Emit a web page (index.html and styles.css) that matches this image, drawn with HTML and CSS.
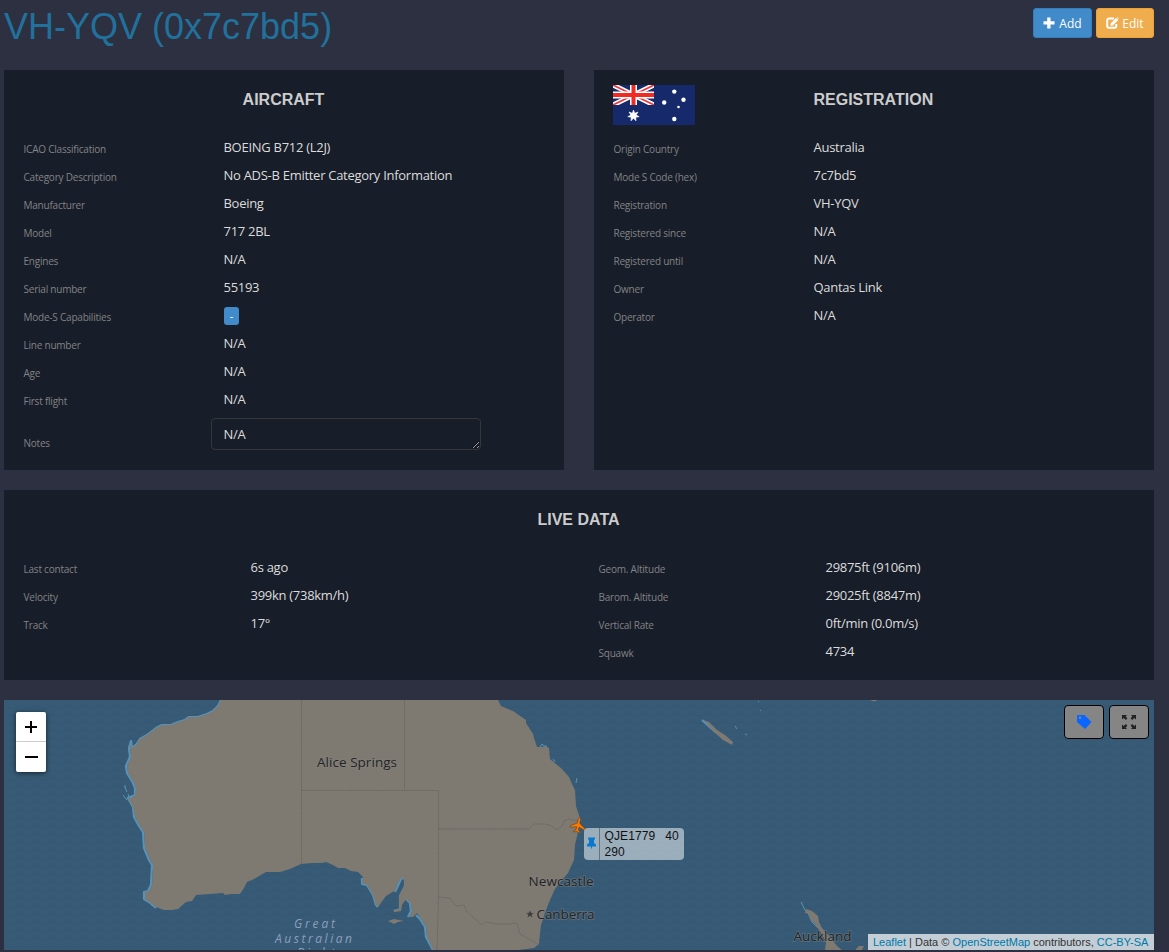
FILE: index.html
```html
<!DOCTYPE html>
<html lang="en">
<head>
<meta charset="utf-8">
<title>VH-YQV (0x7c7bd5)</title>
<link rel="stylesheet" href="styles.css">
</head>
<body>
<header class="top">
  <h1 class="title">VH-YQV (0x7c7bd5)</h1>
  <div class="actions">
    <button class="btn btn-add"><svg class="btn-icon" width="12" height="12" viewBox="0 0 12 12"><path d="M4.2 0.5h3.3v3.7H11.500v3.300H7.500v4H4.200v-4H.5V4.200h3.700z" fill="#fff"/></svg><span>Add</span></button>
    <button class="btn btn-edit"><svg class="btn-icon" width="13" height="12" viewBox="0 0 13 12"><path d="M8 1.500H3A1.800 1.800 0 0 0 1.200 3.300V9A1.800 1.800 0 0 0 3 10.800H8.500A1.800 1.800 0 0 0 10.300 9V7" fill="none" stroke="#fff" stroke-width="1.900"/><path d="M4.400 8.800l.4-2.600L10 1l2.200 2.100L7 8.400zM10.600.4l.5-.4 1.900 1.800-.4.500z" fill="#fff"/></svg><span>Edit</span></button>
  </div>
</header>

<main class="content">
  <div class="pair">
    <section class="panel panel-tall">
      <h2 class="heading">AIRCRAFT</h2>
      <dl class="rows">
        <dt>ICAO Classification</dt><dd>BOEING B712 (L2J)</dd>
        <dt>Category Description</dt><dd>No ADS-B Emitter Category Information</dd>
        <dt>Manufacturer</dt><dd>Boeing</dd>
        <dt>Model</dt><dd>717 2BL</dd>
        <dt>Engines</dt><dd>N/A</dd>
        <dt>Serial number</dt><dd>55193</dd>
        <dt>Mode-S Capabilities</dt><dd><span class="chip">-</span></dd>
        <dt>Line number</dt><dd>N/A</dd>
        <dt>Age</dt><dd>N/A</dd>
        <dt>First flight</dt><dd>N/A</dd>
      </dl>
      <div class="notes-row">
        <label class="notes-label" for="notes">Notes</label>
        <textarea id="notes" class="notes" rows="1">N/A</textarea>
      </div>
    </section>

    <section class="panel panel-tall">
      <div class="reg-head">
        <svg class="flag" width="82" height="40" viewBox="0 0 82 40">
          <defs><clipPath id="canton"><rect width="41" height="20"/></clipPath></defs>
          <rect width="82" height="40" fill="#15296b"/>
          <g clip-path="url(#canton)">
            <path d="M0 0L41 20M41 0L0 20" stroke="#fff" stroke-width="5"/>
            <path d="M0 0L41 20M41 0L0 20" stroke="#ef3340" stroke-width="1.600"/>
            <path d="M20.500 0V20M0 10H41" stroke="#fff" stroke-width="7"/>
            <path d="M20.500 0V20M0 10H41" stroke="#f02b23" stroke-width="4"/>
          </g>
          <path fill="#fff" stroke="#fff" stroke-width=".6" d="M20.500 25l1.200 3.300 3.300-1.300-1.800 3 3 1.700-3.400.5.200 3.600-2.500-2.500-2.500 2.500.2-3.600-3.400-.5 3-1.700-1.800-3 3.300 1.300z"/>
          <g fill="#fff"><circle cx="61.300" cy="6.600" r="2.200"/><circle cx="51.200" cy="17.500" r="2.200"/><circle cx="70.500" cy="14.700" r="2.200"/><circle cx="65.500" cy="22" r="1.300"/><circle cx="61.300" cy="34" r="2.200"/></g>
        </svg>
        <h2 class="heading heading-left">REGISTRATION</h2>
      </div>
      <dl class="rows">
        <dt>Origin Country</dt><dd>Australia</dd>
        <dt>Mode S Code (hex)</dt><dd>7c7bd5</dd>
        <dt>Registration</dt><dd>VH-YQV</dd>
        <dt>Registered since</dt><dd>N/A</dd>
        <dt>Registered until</dt><dd>N/A</dd>
        <dt>Owner</dt><dd>Qantas Link</dd>
        <dt>Operator</dt><dd>N/A</dd>
      </dl>
    </section>
  </div>

  <section class="panel panel-live">
    <h2 class="heading">LIVE DATA</h2>
    <div class="live">
      <dl class="rows rows-live">
        <dt>Last contact</dt><dd>6s ago</dd>
        <dt>Velocity</dt><dd>399kn (738km/h)</dd>
        <dt>Track</dt><dd>17°</dd>
      </dl>
      <dl class="rows rows-live">
        <dt>Geom. Altitude</dt><dd>29875ft (9106m)</dd>
        <dt>Barom. Altitude</dt><dd>29025ft (8847m)</dd>
        <dt>Vertical Rate</dt><dd>0ft/min (0.0m/s)</dd>
        <dt>Squawk</dt><dd>4734</dd>
      </dl>
    </div>
  </section>

  <section class="map">
    <svg class="map-art" width="1150" height="250" viewBox="4 700 1150 250">
      <defs>
        <pattern id="waves" width="16" height="8" patternUnits="userSpaceOnUse"><path d="M0 3Q4 1 8 3T16 3" fill="none" stroke="#365771" stroke-width="1.500"/></pattern>
      </defs>
      <rect x="4" y="700" width="1150" height="250" fill="#375b76"/>
      <rect x="4" y="700" width="1150" height="250" fill="url(#waves)"/>
      <path class="shore" d="M221 700L218 706 213 711 207 714 198 717 189 717 185 720 178 722 171 725 162 725 156 728 147 735 140 739 136 745 132 748 131 741 129 748 130 757 126 766 127 773 133 783 135 788 135 795 128 798 133 807 134 817 139 826 143 832 144 848 149 860 152 865 151 885 148 891 144 892 144 899 149 902 156 908"/>
      <path class="shore" d="M362 878L362 884 367 885 373 895 376 905 378 907M395 892L402 877 405 880 405 886 400 896 400 909 394 911M406 899L410 903 411 911 408 917M416 915L420 919 425 927 426 937 433 950"/>
      <path class="land" d="M221 700L218 706 213 711 207 714 198 717 189 717 185 720 178 722 171 725 162 725 156 728 147 735 140 739 136 745 132 748 131 742 130 748 131 757 127 766 128 773 134 783 136 788 135 796 128 798 133 807 135 817 140 826 144 832 145 848 150 860 153 865 152 885 149 891 145 892 145 899 149 902 156 907 164 910 172 910 178 909 186 902 192 901 196 895 210 894 223 893 225 895 231 894 240 894 244 888 247 882 254 879 266 872 280 872 290 869 301 864 312 863 322 863 326 862 333 865 338 868 345 868 351 871 358 872 363 877 362 883 367 885 373 895 376 905 378 907 386 896 396 890 397 885 402 877 404 880 404 886 399 896 399 909 393 910 395 912 401 911 402 905 406 899 411 904 412 911 409 917 413 917 417 913 421 919 426 927 427 937 433 950H519L534 948 539 944 540 933 541 925 546 910 550 900 555 889 562 880 568 873 574 860 575 845 578 832 580 818 576 806 575 790 572 784 569 777 562 769 556 764 550 759 549 748 545 746 542 747 537 747 535 741 533 734 526 723 526 720 513 711 501 706 498 700Z"/>
      <path class="land" d="M388 921L394 919 404 921 398 922 394 924Z"/>
      <path class="border" d="M301.500 700V864M404.500 700V790M301.500 790.500H438.500V897L437 950M438.500 829H529L534 824H545L552 826 556 830 562 826 564 821 569 819 578 821M438.500 897L450 898 456 906 464 905 467 912 482 925 485 922 497 924 510 924 517 923 520 934 538 944"/>
      <g class="reef"><path d="M125 785v3M128 794l1 3 3 1M123 795l4 5M125 787l2 5"/><path d="M540 747l2-3 2 2h3M553 759l2 3M576 783l1-5M735 726l2 3M745 734l2 1M758 701l1 1M760 710l1 1"/></g>
      <path d="M702 720L714 731 723 737 732 743" fill="none" stroke="#5693bb" stroke-width="2"/>
      <path class="land" d="M703.500 720L709 722 717 730 725 735 733 742 732 745 723 740 714 732Z"/>
      <path d="M801 902L805 910 808 913 812 922 819 929" fill="none" stroke="#5693bb"/>
      <path class="land" d="M806 909L812 911 818 916 819 922 822 928 830 937 837 946 842 950H825L826 942 820 931 815 924 810 919 809 914 805 913ZM856 949L859 946H864L862 950H856ZM870 700H878L874 701.500Z"/>
      <path d="M530 909.500l1.300 3.200h3.300l-2.600 2 1 3.500-3-2.100-3 2.100 1-3.500-2.600-2h3.300z" fill="#3d3d3f" stroke="#8c8880" stroke-width=".5"/>
      <g class="place">
        <text x="317" y="767" textLength="80">Alice Springs</text>
        <text x="528.500" y="886" textLength="65">Newcastle</text>
        <text x="536.500" y="919" textLength="58">Canberra</text>
        <text x="793.500" y="941" textLength="58">Auckland</text>
      </g>
      <g class="sea">
        <text x="294" y="928" textLength="41">Great</text>
        <text x="275" y="943" textLength="77">Australian</text>
        <text x="297" y="957" textLength="38">Bight</text>
      </g>
      <g transform="translate(578.200 825.200) rotate(12)">
        <path d="M0-7.500C.9-7.500 1.200-6.500 1.200-5.500V-2L7.500 2V3.700L1.200 1.800V4.800L3.200 6.200V7.500L0 6.500-3.200 7.500V6.200L-1.200 4.800V1.800L-7.500 3.700V2L-1.200-2V-5.500C-1.200-6.500-.9-7.500 0-7.500Z" fill="#ff7800" stroke="#624523" stroke-width=".6"/>
      </g>
    </svg>

    <div class="zoom-box"><button class="zoom-btn"><svg width="12" height="12" viewBox="0 0 12 12"><path d="M6 0V12M0 6H12" stroke="#000" stroke-width="2"/></svg></button><button class="zoom-btn zoom-out"><svg width="13" height="12" viewBox="0 0 13 12"><path d="M0 6H13" stroke="#000" stroke-width="2"/></svg></button></div>

    <div class="flight">
      <div class="flight-pin"><svg width="9" height="13" viewBox="0 0 9 13"><path d="M1 .5H8V2.500H7V6L9 7.500V9.500H5.200L4.500 12.500 3.800 9.500H0V7.500L2 6V2.500H1Z" fill="#0879cf"/></svg></div>
      <div class="flight-text"><div><span>QJE1779</span><span class="flight-speed">40</span></div><div>290</div></div>
    </div>

    <div class="tools">
      <button class="tool"><svg class="tool-icon" width="16" height="16" viewBox="0 0 16 16"><path fill-rule="evenodd" d="M1 1H8.500L15.500 8 9 15 1 8ZM4 2.500A1.200 1.200 0 1 0 4 5 1.200 1.200 0 0 0 4 2.500Z" fill="#0a66ff"/></svg></button>
      <button class="tool"><svg class="tool-icon" width="16" height="16" viewBox="0 0 16 16" fill="#222"><path d="M1 1H6L4.600 2.400 6.400 4.200 4.800 5.900 2.800 4.100 1 5.500ZM15 1H10L11.400 2.400 9.600 4.200 11.200 5.900 13.200 4.100 15 5.500ZM1 15H6L4.600 13.600 6.400 11.800 4.800 10.100 2.800 11.900 1 10.500ZM15 15H10L11.400 13.600 9.600 11.800 11.200 10.100 13.200 11.900 15 10.500Z"/></svg></button>
    </div>

    <div class="credit"><a>Leaflet</a> | Data © <a>OpenStreetMap</a> contributors, <a>CC-BY-SA</a></div>
  </section>
</main>
</body>
</html>
```
FILE: styles.css
```css
* { box-sizing: border-box; }
body {
  margin: 0;
  padding: 0 15px 0 4px;
  background: #2c3040;
  color: #dcdcdc;
  font: 13px/20px "Open Sans", "Noto Sans", sans-serif;
  overflow: hidden;
}
h1, h2, dl, dd { margin: 0; font-weight: inherit; }
button { font-family: inherit; padding: 0; cursor: pointer; }
.top { display: flex; justify-content: space-between; height: 70px; padding-top: 8px; }
.title { font: 36px/38px "Liberation Sans", Arial, sans-serif; color: #22719c; white-space: nowrap; }
.actions { display: flex; gap: 4px; }
.btn {
  display: flex; align-items: center; justify-content: center; gap: 3px;
  height: 30px; border: 1px solid; border-radius: 3px; color: #fff; font-size: 12px;
}
.btn-add { width: 59px; background: #428bca; border-color: #357ebd; gap: 4px; }
.btn-edit { width: 58px; background: #f0ad4e; border-color: #eea236; }
.btn-icon { flex: none; }

.content { display: flex; flex-direction: column; gap: 20px; }
.pair { display: grid; grid-template-columns: 560px 560px; gap: 30px; }
.panel { background: #171d29; padding: 15px 20px 0; }
.panel-tall { height: 400px; }
.panel-live { height: 190px; }
.heading {
  height: 48px; padding: 5px 1px 0 0; text-align: center; color: #ccc;
  font: bold 16px/20px "Liberation Sans", Arial, sans-serif;
}
.reg-head { display: grid; grid-template-columns: 199.500px auto; height: 48px; }
.heading-left { text-align: left; }
.flag { margin-left: -1px; }
.rows { display: grid; grid-template-columns: 200px 1fr; grid-auto-rows: 28px; }
.rows dt, .notes-label { color: #838383; font-size: 10px; letter-spacing: -0.22px; padding-top: 6px; margin-left: -.5px; white-space: nowrap; }
.rows dd { padding: 4px 0 0; margin-left: -.5px; font-size: 13px; letter-spacing: -0.28px; line-height: 20px; white-space: nowrap; }
.live { display: grid; grid-template-columns: 575px 1fr; }
.rows-live { grid-template-columns: 227px 1fr; }
.chip {
  display: block; width: 15px; height: 18px; border-radius: 3px; background: #428bca;
  color: #fff; font-size: 11px; line-height: 18px; text-align: center; margin: 2px 0 0 .5px;
}
.notes-row { display: flex; height: 50px; }
.notes-row .notes-label { width: 187.500px; padding-top: 20px; }
.notes {
  width: 270px; height: 32px; margin-top: 5px; padding: 5px 11.500px; background: transparent;
  border: 1px solid #343638; border-radius: 4px; color: #dcdcdc; resize: vertical; overflow: hidden;
  font: 13px/20px "Open Sans", "Noto Sans", sans-serif; letter-spacing: -0.27px;
}

.map { position: relative; height: 250px; overflow: hidden; }
.map-art { display: block; }
.land { fill: #7e7971; }
.shore { fill: none; stroke: #5693bb; stroke-width: 2.2; stroke-linejoin: round; }
.border { fill: none; stroke: #67645f; stroke-width: .8; stroke-dasharray: 2 .7; }
.reef path { fill: none; stroke: #5693bb; }
.place text { font: 13.5px "Open Sans", "Noto Sans", sans-serif; fill: #222427; stroke: #8a8780; stroke-opacity: .5; stroke-width: 1.5; paint-order: stroke; }
.sea text { font: italic 12px "Open Sans", "Noto Sans", sans-serif; fill: #8d9ebd; }

.zoom-box { position: absolute; left: 12px; top: 12px; width: 30px; border-radius: 2px; overflow: hidden; box-shadow: 0 1px 5px rgba(0,0,0,.65); }
.zoom-btn { display: flex; align-items: center; justify-content: center; width: 30px; height: 30px; border: 0; border-bottom: 1px solid #ccc; background: #fff; }
.zoom-out { border-bottom: 0; }
.flight {
  position: absolute; left: 580px; top: 128px; width: 100px; height: 32px; display: flex;
  background: rgba(205,214,222,.67); border-radius: 4px; color: #111;
  font: 12px/16px "Liberation Sans", Arial, sans-serif; letter-spacing: .1px;
}
.flight-pin { display: flex; align-items: center; justify-content: center; width: 16px; padding-bottom: 2px; border-right: 1px solid #68747d; }
.flight-text { padding-left: 4.5px; }
.flight-speed { margin-left: 10px; }
.tools { position: absolute; right: 5px; top: 5px; display: flex; gap: 5px; }
.tool { display: flex; align-items: center; justify-content: center; width: 40px; height: 34px; background: #858585; border: 1px solid #000; border-radius: 4px; }
.tool-icon { margin: 0 1px 1px 0; }
.credit {
  position: absolute; right: 0; bottom: 0; width: 286px; height: 16px; padding-left: 5px;
  background: rgba(255,255,255,.7); color: #333; white-space: nowrap;
  font: 11px/16px "Liberation Sans", Arial, sans-serif;
}
.credit a { color: #0078a8; }
```
